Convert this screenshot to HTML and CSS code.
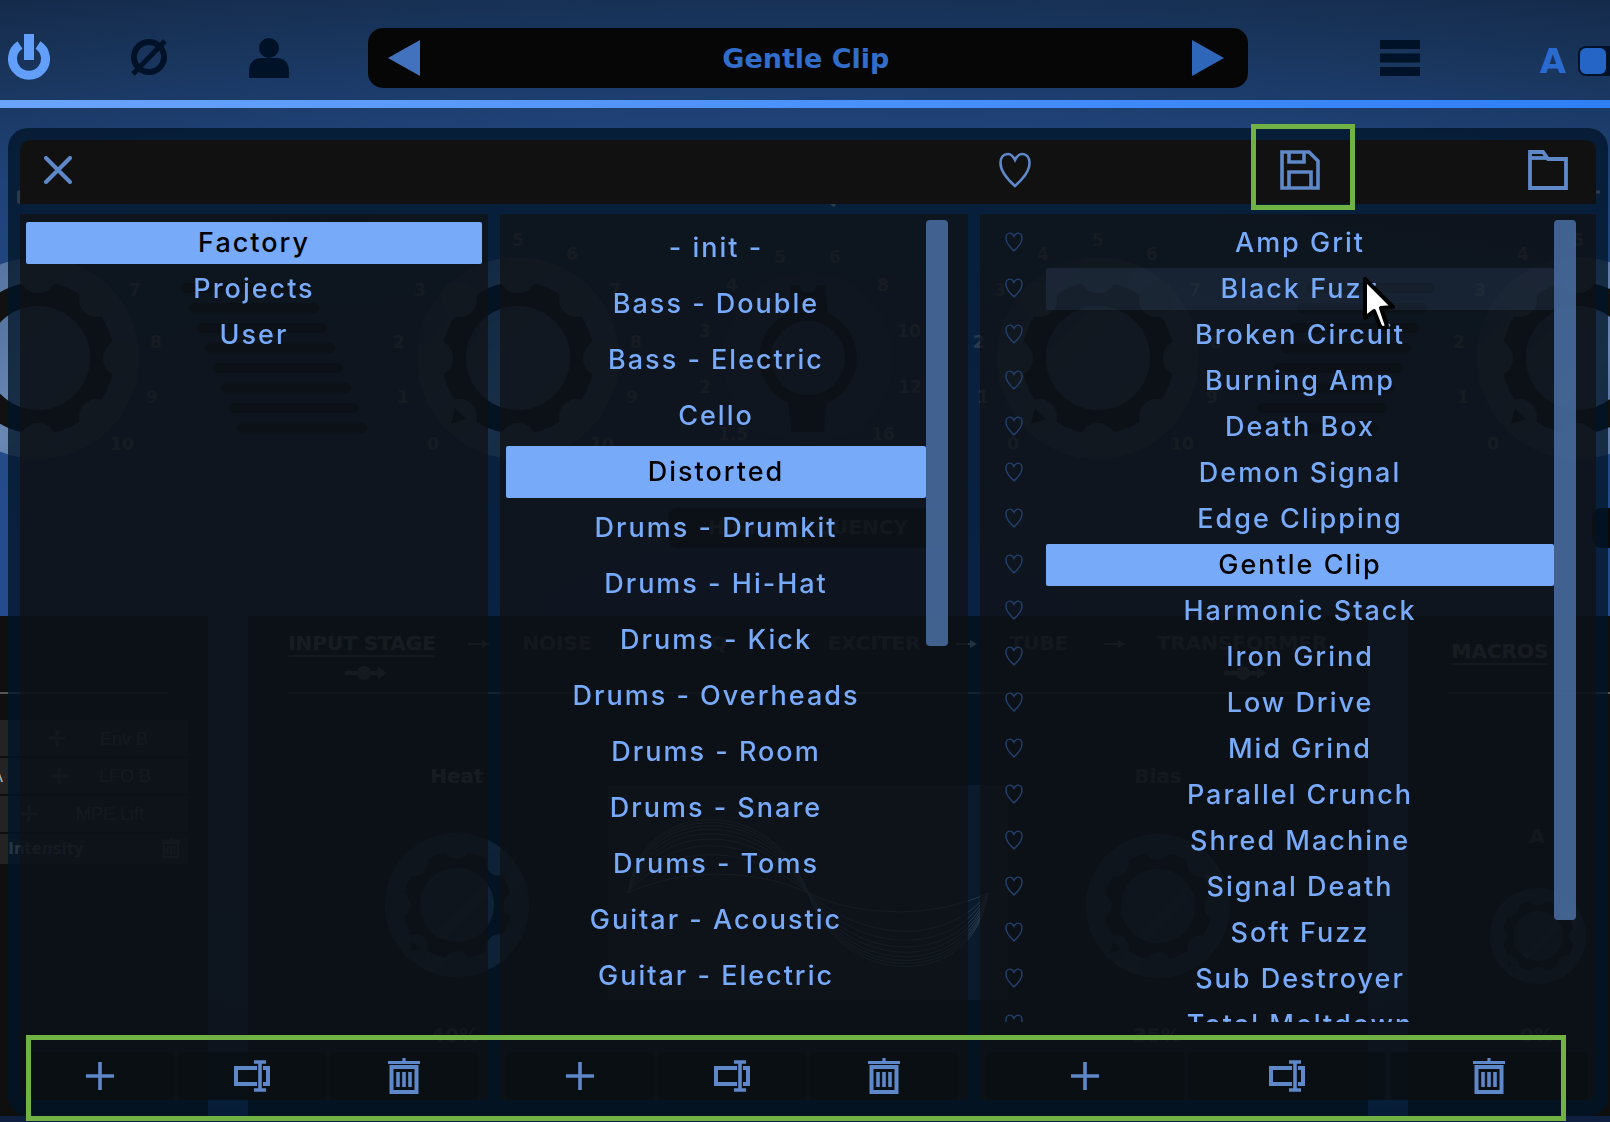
FILE: index.html
```html
<!DOCTYPE html>
<html lang="en">
<head>
  <meta charset="UTF-8">
  <meta name="viewport" content="width=device-width, initial-scale=1.0">
  <title>Preset Browser</title>
  <link rel="stylesheet" href="styles.css">
</head>
<body>
  <!-- shared icons -->
  <svg class="sprite" aria-hidden="true">
    <symbol id="heart" viewBox="0 0 32 36">
      <path d="M16 8C14 4 11.500 2 9 2C4.500 2 1.500 5.500 1.500 11C1.500 19 8 27 16 34C24 27 30.500 19 30.500 11C30.500 5.500 27.500 2 23 2C20.500 2 18 4 16 8Z" fill="none" stroke="currentColor" stroke-width="2.600"/>
    </symbol>
    <symbol id="plus" viewBox="0 0 28 28">
      <path d="M14 0V28M0 14H28" stroke="currentColor" stroke-width="3.600"/>
    </symbol>
    <symbol id="rename" viewBox="0 0 36 32">
      <path d="M23 8H2V24H23M29 8H34V24H29" fill="none" stroke="currentColor" stroke-width="4"/>
      <path d="M20 2H32M20 30H32M26 2V30" fill="none" stroke="currentColor" stroke-width="3.600"/>
    </symbol>
    <symbol id="trash" viewBox="0 0 32 36">
      <path d="M0 4.500H32M16 0V4" stroke="currentColor" stroke-width="3.200"/>
      <path d="M3.500 9H28.500V34H3.500Z" fill="none" stroke="currentColor" stroke-width="4"/>
      <path d="M10 14V29M16 14V29M22 14V29" stroke="currentColor" stroke-width="3.600"/>
    </symbol>
    <symbol id="knob" viewBox="-101 -101 202 202">
      <circle r="101" fill="url(#metal)"/>
      <circle r="76" fill="#111"/>
      <g fill="#5b78a6">
        <circle cx="83" cy="0" r="18"/><circle cx="-83" cy="0" r="18"/>
        <circle cx="0" cy="-83" r="18"/><circle cx="0" cy="83" r="18"/>
        <circle cx="59" cy="-59" r="18"/><circle cx="-59" cy="-59" r="18"/>
        <circle cx="59" cy="59" r="18"/><circle cx="-59" cy="59" r="18"/>
      </g>
      <circle r="52" fill="url(#metal)"/>
      <path d="M-67 66L-63 50L-52 61Z" fill="#0d0d0d"/>
    </symbol>
  </svg>

  <header class="topbar">
    <button class="tool power" aria-label="Power">
      <svg width="42" height="48" viewBox="0 0 42 48"><path d="M12 11A16.500 16.500 0 1 0 30 11" fill="none" stroke="currentColor" stroke-width="9"/><path d="M16 0H26V26H16Z" fill="currentColor"/></svg>
    </button>
    <button class="tool" aria-label="Invert phase">
      <svg width="38" height="38" viewBox="0 0 38 38"><circle cx="19" cy="18" r="15" fill="none" stroke="currentColor" stroke-width="6"/><path d="M3 35L35 2" stroke="currentColor" stroke-width="5"/></svg>
    </button>
    <button class="tool" aria-label="Account">
      <svg width="40" height="40" viewBox="0 0 40 40" fill="currentColor"><circle cx="20" cy="10" r="10"/><path d="M0 40V34Q0 20 13 20H27Q40 20 40 34V40Z"/></svg>
    </button>
    <div class="preset">
      <button aria-label="Previous preset"><svg width="32" height="36" viewBox="0 0 32 36"><path d="M32 0V36L0 18Z" fill="#4272bd"/></svg></button>
      <span class="preset-name">Gentle Clip</span>
      <button aria-label="Next preset"><svg width="32" height="36" viewBox="0 0 32 36"><path d="M0 0V36L32 18Z" fill="#2e66ba"/></svg></button>
    </div>
    <button class="tool menu" aria-label="Menu">
      <svg width="40" height="36" viewBox="0 0 40 36" fill="currentColor"><path d="M0 0H40V9H0ZM0 13.500H40V22.500H0ZM0 27H40V36H0Z"/></svg>
    </button>
    <label class="ab">A<input type="checkbox"></label>
  </header>

  <main>
    <!-- synth face behind the browser -->
    <svg class="face" viewBox="0 108 1610 1014" preserveAspectRatio="xMidYMin slice">
      <defs>
        <linearGradient id="metal" x1="0" y1="0" x2="1" y2="1">
          <stop offset="0" stop-color="#506e9a"/><stop offset=".6" stop-color="#6a87b4"/><stop offset="1" stop-color="#55729e"/>
        </linearGradient>
      </defs>
      <rect x="17" y="190" width="10" height="14" rx="3" fill="#c8c8c8"/>
      <path d="M1594 192H1600" stroke="#c8c8c8" stroke-width="3"/>
      <path d="M831 203L835 206" stroke="#c8c8c8" stroke-width="3"/>

      <use href="#knob" x="-63" y="257" width="202" height="202"/>
      <use href="#knob" x="417" y="257" width="202" height="202"/>
      <use href="#knob" x="997" y="257" width="202" height="202"/>
      <use href="#knob" x="1477" y="257" width="202" height="202"/>

      <circle cx="808" cy="358" r="85" fill="#4a6592"/>
      <path d="M791 285H825L828 316L827 400L824 432H791L788 400L789 316Z" fill="#0c0c0c"/>
      <circle cx="808" cy="358" r="49" fill="#0c0c0c"/>
      <circle cx="808" cy="358" r="37" fill="#4a6592"/>
      <circle cx="808" cy="284" r="9" fill="#4a6592"/>

      <g class="num">
        <text x="135" y="296">7</text><text x="156" y="348">8</text><text x="152" y="403">9</text><text x="122" y="450">10</text>

        <text x="433" y="450">0</text><text x="403" y="403">1</text><text x="399" y="348">2</text>
        <text x="420" y="296">3</text><text x="518" y="246">5</text><text x="572" y="260">6</text>
        <text x="615" y="296">7</text><text x="636" y="348">8</text><text x="632" y="403">9</text><text x="602" y="450">10</text>

        <text x="733" y="440">1.5</text><text x="705" y="393">2</text><text x="705" y="337">3</text>
        <text x="732" y="291">4</text><text x="780" y="263">5</text><text x="835" y="263">6</text>
        <text x="883" y="291">8</text><text x="909" y="337">10</text><text x="910" y="393">12</text>
        <text x="883" y="440">16</text>

        <text x="1013" y="450">0</text><text x="983" y="403">1</text><text x="979" y="348">2</text>
        <text x="1000" y="296">3</text><text x="1043" y="260">4</text><text x="1098" y="246">5</text>
        <text x="1152" y="260">6</text><text x="1195" y="296">7</text><text x="1216" y="348">8</text>
        <text x="1212" y="403">9</text><text x="1182" y="450">10</text>

        <text x="1493" y="450">0</text><text x="1463" y="403">1</text><text x="1459" y="348">2</text>
        <text x="1480" y="296">3</text><text x="1523" y="260">4</text><text x="1578" y="246">5</text>
      </g>

      <g class="vent">
        <path d="M186 288H306M194 308H314M202 328H322M210 348H330M218 368H338M226 388H346M234 408H354M242 428H362"/>
        <path d="M1310 288H1430M1302 308H1422M1294 328H1414M1286 348H1406M1278 368H1398M1270 388H1390M1262 408H1382M1254 428H1374"/>
      </g>

      <rect x="668" y="508" width="280" height="40" rx="9" fill="#0a0a0c"/>
      <text class="tab" x="808" y="534">HIGH FREQUENCY</text>
      <rect x="1592" y="508" width="60" height="40" rx="9" fill="#0a0a0c"/>

      <!-- lower panels -->
      <g fill="#0f0f0f">
        <rect x="0" y="616" width="208" height="500"/>
        <rect x="248" y="616" width="1120" height="500"/>
        <rect x="1408" y="616" width="202" height="500"/>
      </g>
      <rect y="1116" width="1610" height="6" fill="#0e1f3f"/>
      <path d="M0 693H168M288 693H1330M1448 693H1610" stroke="#555" stroke-width="2"/>

      <g fill="#232323">
        <rect x="0" y="720" width="188" height="36"/><rect x="0" y="758" width="188" height="36"/>
        <rect x="0" y="796" width="188" height="36"/><rect x="0" y="834" width="188" height="30"/>
      </g>
      <g class="mod">
        <text x="124" y="745">Env B</text><text x="125" y="782">LFO B</text><text x="110" y="820">MPE Lift</text>
        <text x="-3" y="782" fill="#aaa">A</text>
      </g>
      <text class="tab small" x="46" y="854">Intensity</text>
      <g class="move">
        <path d="M49 738H65M57 730V746M51 776H67M59 768V784M21 814H37M29 806V822"/>
      </g>
      <svg x="162" y="837" width="18" height="22" color="#999"><use href="#trash"/></svg>

      <g class="tab">
        <text class="on" x="362" y="650">INPUT STAGE</text><text x="557" y="650">NOISE</text>
        <text x="712" y="650">EQ</text><text x="874" y="650">EXCITER</text><text x="1039" y="650">TUBE</text>
        <text x="1242" y="650">TRANSFORMER</text><text class="on" x="1500" y="658">MACROS</text>
        <text class="on" x="457" y="783">Heat</text><text x="1158" y="783">Bias</text><text x="1537" y="843">A</text>
        <text x="455" y="1042">40%</text><text x="1157" y="1042">35%</text><text x="1537" y="1042">0%</text>
      </g>
      <path d="M289 656H434M1453 664H1547" stroke="#999" stroke-width="2"/>
      <g fill="#9a9a9a">
        <path d="M468 643H482V640L489 644L482 648V645H468Z"/>
        <path d="M956 643H970V640L977 644L970 648V645H956Z"/>
        <path d="M1104 643H1118V640L1125 644L1118 648V645H1104Z"/>
        <path d="M345 671H378V667L387 673L378 679V675H345Z"/><circle cx="364" cy="673" r="7"/>
        <path d="M1224 671H1257V667L1266 673L1257 679V675H1224Z"/><circle cx="1243" cy="673" r="7"/>
      </g>

      <g opacity=".6">
        <use href="#knob" x="385" y="833" width="144" height="144"/>
        <use href="#knob" x="1086" y="834" width="144" height="144"/>
        <use href="#knob" x="1490" y="888" width="96" height="96"/>
      </g>
      <rect x="608" y="785" width="400" height="215" fill="#2b3340"/>
      <g class="wave">
        <path d="M628 893C642 795 774 795 808 893C842 991 974 991 988 893"/>
        <path d="M628 893C644 799 772 799 808 893C844 987 972 987 988 893"/>
        <path d="M628 893C646 803 770 803 808 893C846 983 970 983 988 893"/>
        <path d="M628 893C649 808 767 808 808 893C849 978 967 978 988 893"/>
        <path d="M628 893C652 814 764 814 808 893C852 972 964 972 988 893"/>
        <path d="M628 893C656 821 760 821 808 893C856 965 960 965 988 893"/>
        <path d="M628 893C662 830 754 830 808 893C862 956 954 956 988 893"/>
        <path d="M628 893C668 842 748 842 808 893C868 944 948 944 988 893"/>
        <path d="M628 893C680 868 756 868 808 893C860 918 936 918 988 893"/>
      </g>
    </svg>

    <section class="browser">
      <div class="toolbar">
        <button class="close" aria-label="Close"><svg width="28" height="28" viewBox="0 0 28 28"><path d="M2 2L26 26M26 2L2 26" stroke="currentColor" stroke-width="4" stroke-linecap="round"/></svg></button>
        <div class="toolbar-right">
          <button class="fav" aria-label="Favourites"><svg width="32" height="36"><use href="#heart"/></svg></button>
          <button class="save" aria-label="Save preset">
            <svg width="40" height="40" viewBox="0 0 40 40" fill="none" stroke="currentColor" stroke-width="3.600"><path d="M2 2H29L38 11V38H2Z"/><path d="M9 2V12H24V2"/><path d="M9 38V22H31V38"/></svg>
          </button>
          <button class="folder" aria-label="Open folder">
            <svg width="40" height="40" viewBox="0 0 40 40" fill="none" stroke="currentColor" stroke-width="3.800"><path d="M2 38V2H15L20 9H38V38Z"/><path d="M2 8H19"/></svg>
          </button>
        </div>
      </div>

      <div class="columns">
        <div class="column">
          <div class="scroller plain">
            <ul class="list">
              <li><button class="item selected">Factory</button></li>
              <li><button class="item">Projects</button></li>
              <li><button class="item">User</button></li>
            </ul>
          </div>
          <div class="actions">
            <button aria-label="Add bank"><svg width="28" height="28"><use href="#plus"/></svg></button>
            <button aria-label="Rename bank"><svg width="36" height="32"><use href="#rename"/></svg></button>
            <button aria-label="Delete bank"><svg width="32" height="36"><use href="#trash"/></svg></button>
          </div>
        </div>

        <div class="column">
          <div class="scroller">
            <ul class="list tall">
              <li><button class="item">- init -</button></li>
              <li><button class="item">Bass - Double</button></li>
              <li><button class="item">Bass - Electric</button></li>
              <li><button class="item">Cello</button></li>
              <li><button class="item selected">Distorted</button></li>
              <li><button class="item">Drums - Drumkit</button></li>
              <li><button class="item">Drums - Hi-Hat</button></li>
              <li><button class="item">Drums - Kick</button></li>
              <li><button class="item">Drums - Overheads</button></li>
              <li><button class="item">Drums - Room</button></li>
              <li><button class="item">Drums - Snare</button></li>
              <li><button class="item">Drums - Toms</button></li>
              <li><button class="item">Guitar - Acoustic</button></li>
              <li><button class="item">Guitar - Electric</button></li>
            </ul>
            <div class="scrollbar half"></div>
          </div>
          <div class="actions">
            <button aria-label="Add folder"><svg width="28" height="28"><use href="#plus"/></svg></button>
            <button aria-label="Rename folder"><svg width="36" height="32"><use href="#rename"/></svg></button>
            <button aria-label="Delete folder"><svg width="32" height="36"><use href="#trash"/></svg></button>
          </div>
        </div>

        <div class="column">
          <div class="scroller">
            <ul class="list presets">
              <li><button class="like" aria-label="Like"><svg width="18" height="20"><use href="#heart"/></svg></button><button class="item">Amp Grit</button></li>
              <li><button class="like" aria-label="Like"><svg width="18" height="20"><use href="#heart"/></svg></button><button class="item hovered">Black Fuzz<svg class="cursor" width="34" height="56" viewBox="0 0 34 56"><path d="M3 3V42L12 35L18 50Q21 54 25 50L19 32L31 31Z" fill="#fff" stroke="#000" stroke-width="4" stroke-linejoin="round"/></svg></button></li>
              <li><button class="like" aria-label="Like"><svg width="18" height="20"><use href="#heart"/></svg></button><button class="item">Broken Circuit</button></li>
              <li><button class="like" aria-label="Like"><svg width="18" height="20"><use href="#heart"/></svg></button><button class="item">Burning Amp</button></li>
              <li><button class="like" aria-label="Like"><svg width="18" height="20"><use href="#heart"/></svg></button><button class="item">Death Box</button></li>
              <li><button class="like" aria-label="Like"><svg width="18" height="20"><use href="#heart"/></svg></button><button class="item">Demon Signal</button></li>
              <li><button class="like" aria-label="Like"><svg width="18" height="20"><use href="#heart"/></svg></button><button class="item">Edge Clipping</button></li>
              <li><button class="like" aria-label="Like"><svg width="18" height="20"><use href="#heart"/></svg></button><button class="item selected">Gentle Clip</button></li>
              <li><button class="like" aria-label="Like"><svg width="18" height="20"><use href="#heart"/></svg></button><button class="item">Harmonic Stack</button></li>
              <li><button class="like" aria-label="Like"><svg width="18" height="20"><use href="#heart"/></svg></button><button class="item">Iron Grind</button></li>
              <li><button class="like" aria-label="Like"><svg width="18" height="20"><use href="#heart"/></svg></button><button class="item">Low Drive</button></li>
              <li><button class="like" aria-label="Like"><svg width="18" height="20"><use href="#heart"/></svg></button><button class="item">Mid Grind</button></li>
              <li><button class="like" aria-label="Like"><svg width="18" height="20"><use href="#heart"/></svg></button><button class="item">Parallel Crunch</button></li>
              <li><button class="like" aria-label="Like"><svg width="18" height="20"><use href="#heart"/></svg></button><button class="item">Shred Machine</button></li>
              <li><button class="like" aria-label="Like"><svg width="18" height="20"><use href="#heart"/></svg></button><button class="item">Signal Death</button></li>
              <li><button class="like" aria-label="Like"><svg width="18" height="20"><use href="#heart"/></svg></button><button class="item">Soft Fuzz</button></li>
              <li><button class="like" aria-label="Like"><svg width="18" height="20"><use href="#heart"/></svg></button><button class="item">Sub Destroyer</button></li>
              <li><button class="like" aria-label="Like"><svg width="18" height="20"><use href="#heart"/></svg></button><button class="item">Total Meltdown</button></li>
            </ul>
            <div class="scrollbar"></div>
          </div>
          <div class="actions">
            <button aria-label="Add preset"><svg width="28" height="28"><use href="#plus"/></svg></button>
            <button aria-label="Rename preset"><svg width="36" height="32"><use href="#rename"/></svg></button>
            <button aria-label="Delete preset"><svg width="32" height="36"><use href="#trash"/></svg></button>
          </div>
        </div>
      </div>
      <div class="callout"></div>
    </section>
  </main>
</body>
</html>
```

FILE: styles.css
```css
* {
  box-sizing: border-box;
}
body {
  margin: 0;
  height: 100vh;
  display: flex;
  flex-direction: column;
  overflow: hidden;
  font-family: Inter, "Open Sans", sans-serif;
  background: radial-gradient(ellipse 130% 55% at 50% 55%, #2a54a0 0%, #1f4278 80%, #19355c 96%, #142a4a 108%);
}
button {
  padding: 0;
  border: 0;
  background: none;
  color: inherit;
  font: inherit;
  letter-spacing: inherit;
  cursor: pointer;
}
svg {
  display: block;
}
.sprite {
  position: absolute;
  width: 0;
  height: 0;
}

/* top bar */
.topbar {
  display: flex;
  align-items: center;
  padding: 28px 0 12px 8px;
  border-bottom: 8px solid #4a90f8;
  border-image: linear-gradient(90deg, #6aa4fc, #2e7ff6) 1;
  color: #001228;
}
.tool {
  display: flex;
  justify-content: center;
  width: 42px;
  margin-right: 78px;
}
.power {
  color: #629ffa;
}
.preset {
  flex: 1;
  display: flex;
  align-items: center;
  justify-content: space-between;
  height: 60px;
  padding: 0 24px 0 20px;
  border-radius: 15px;
  background: #060606;
}
.preset-name {
  font: bold 27px "DejaVu Sans", sans-serif;
  color: #316dca;
}
.menu {
  margin: 0 119px 0 131px;
}
.ab {
  display: flex;
  align-items: center;
  gap: 12px;
  padding-top: 6px;
  font: bold 34px/30px "DejaVu Sans", sans-serif;
  color: #2b6bd0;
}
.ab input {
  appearance: none;
  width: 32px;
  height: 30px;
  margin: 0;
  padding: 2px;
  border-radius: 8px 0 0 8px;
  background: #001228;
}
.ab input::before {
  content: "";
  display: block;
  width: 26px;
  height: 26px;
  border-radius: 6px;
  background: #2465c6;
}

/* synth face */
main {
  flex: 1;
  min-height: 0;
  display: flex;
  position: relative;
  padding: 20px 2px 6px 8px;
}
.face {
  position: absolute;
  top: 0;
  left: 0;
  width: 100%;
  height: 100%;
}
.num {
  font: bold 17px "DejaVu Sans", sans-serif;
  text-anchor: middle;
  fill: #b4bcc8;
}
.tab {
  font: bold 20px "DejaVu Sans", sans-serif;
  text-anchor: middle;
  fill: #7c7c7c;
}
.tab.small {
  font-size: 15px;
  fill: #a8a8a8;
}
.tab .on {
  fill: #c0c0c0;
}
.mod {
  font: 18px "Liberation Sans", sans-serif;
  text-anchor: middle;
  fill: #999;
}
.move path {
  stroke: #888;
  stroke-width: 3;
}
.vent path {
  stroke: #020305;
  stroke-width: 10;
  stroke-linecap: round;
}
.wave path {
  fill: none;
  stroke: #a4b4c6;
  stroke-width: 1;
}

/* preset browser */
.browser {
  flex: 1;
  min-width: 0;
  display: flex;
  flex-direction: column;
  gap: 10px;
  position: relative;
  padding: 12px 12px 16px;
  border-radius: 20px;
  background: rgba(1, 20, 40, 0.78);
  color: #5f88c8;
}
.toolbar {
  display: flex;
  height: 64px;
  border-radius: 10px 10px 0 0;
  background: #111;
}
.toolbar button {
  display: flex;
  align-items: center;
  justify-content: center;
}
.toolbar .close {
  width: 76px;
  padding-bottom: 4px;
}
.toolbar-right {
  display: flex;
  width: 39%;
  margin-left: auto;
}
.toolbar .fav {
  width: 68px;
  padding-bottom: 4px;
}
.toolbar .save {
  width: 104px;
  height: 86px;
  margin: -16px 145px -6px auto;
  padding: 6px 6px 0 0;
  border: 5px solid #71b244;
}
.toolbar .folder {
  width: 96px;
  padding-bottom: 4px;
}
.columns {
  flex: 1;
  min-height: 0;
  display: grid;
  grid-template-columns: 468fr 468fr 616fr;
  gap: 12px;
}
.column {
  display: flex;
  flex-direction: column;
  gap: 30px;
  min-height: 0;
  padding: 6px 6px 0;
  background: rgba(16, 17, 20, 0.74);
}
.column:first-child {
  border-radius: 0 0 0 10px;
}
.column:last-child {
  border-radius: 0 0 10px 0;
}
.scroller {
  flex: 1;
  min-height: 0;
  display: flex;
  padding-right: 14px;
  overflow: hidden;
}
.scroller.plain {
  padding-right: 0;
}
.scrollbar {
  width: 22px;
  height: 700px;
  border-radius: 4px;
  background: rgba(89, 131, 194, 0.7);
}
.scrollbar.half {
  height: 426px;
}
.list {
  flex: 1;
  display: flex;
  flex-direction: column;
  gap: 4px;
  margin: 0;
  padding: 2px 0 0;
  list-style: none;
  font-size: 27px;
  font-weight: 500;
  letter-spacing: 2px;
  color: #78aafa;
}
.list li {
  display: flex;
}
.item {
  flex: 1;
  position: relative;
  height: 42px;
  padding-bottom: 2px;
  border-radius: 2px;
}
.tall .item {
  height: 52px;
}
.item.selected {
  background: #78aafa;
  color: #000;
}
.item.hovered {
  background: rgba(120, 170, 250, 0.1);
}
.presets li {
  gap: 4px;
}
.like {
  display: flex;
  align-items: center;
  justify-content: center;
  width: 56px;
  padding-bottom: 2px;
  color: #24406a;
}
.cursor {
  position: absolute;
  left: calc(50% + 62px);
  top: 8px;
  z-index: 1;
}
.actions {
  display: grid;
  grid-template-columns: repeat(3, 1fr);
  gap: 4px;
  height: 48px;
  margin-right: 4px;
}
.column:last-child .actions {
  margin-right: 2px;
}
.actions button {
  display: flex;
  align-items: center;
  justify-content: center;
  background: rgba(9, 15, 16, 0.6);
}
.callout {
  position: absolute;
  left: 18px;
  right: 42px;
  bottom: -5px;
  height: 86px;
  border: 5px solid #71b244;
  pointer-events: none;
}
```
